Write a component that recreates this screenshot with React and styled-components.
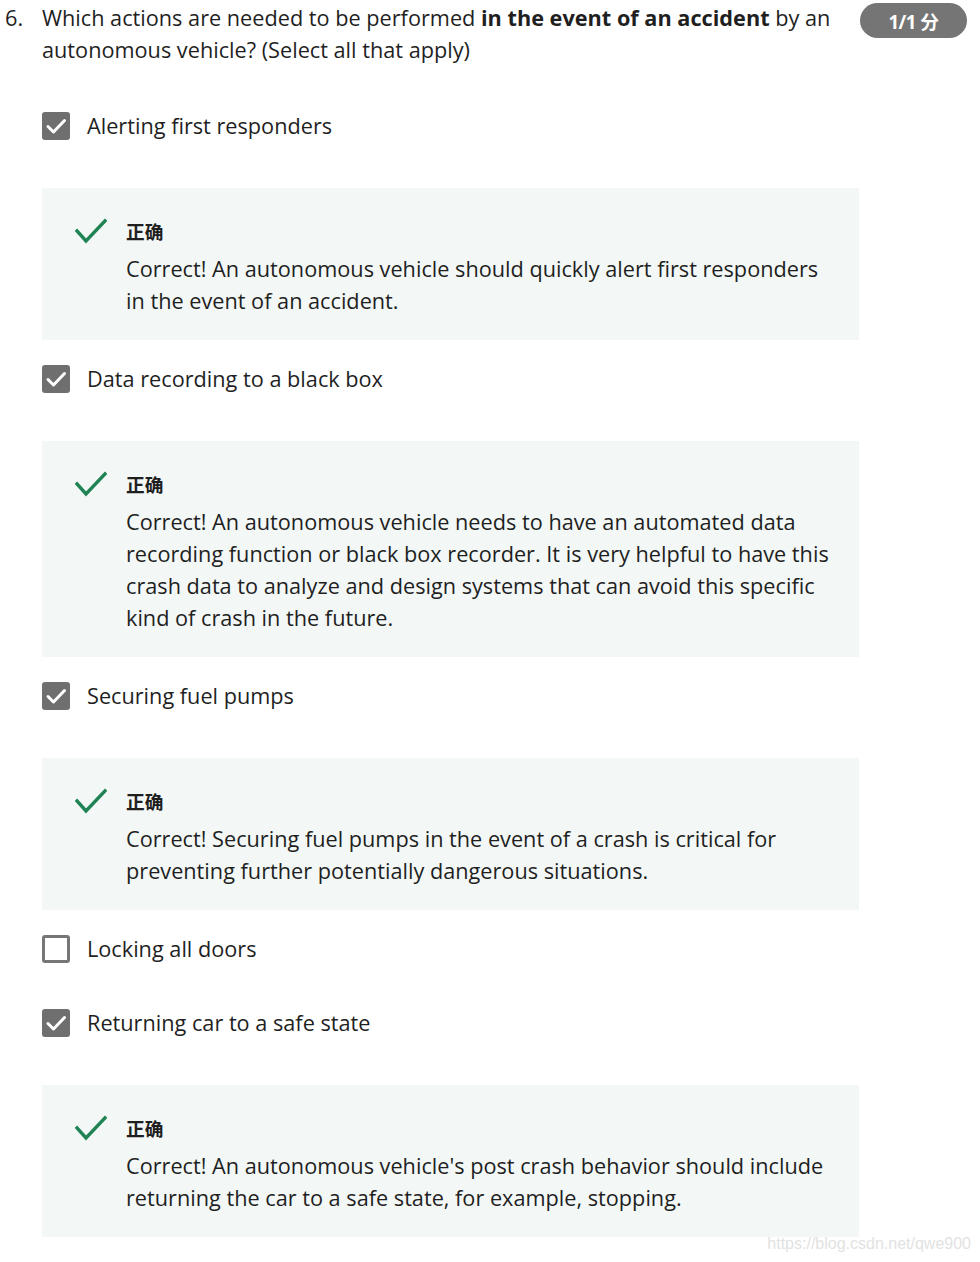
import { createGlobalStyle } from "styled-components";
import styled from "styled-components";

const GlobalStyle = createGlobalStyle`
  html, body {
    margin: 0;
    padding: 0;
    background: #ffffff;
  }
  body {
    font-family: "Open Sans", "Noto Sans CJK SC", sans-serif;
    color: #1f1f1f;
  }
`;

const Page = styled.div`
  position: relative;
  width: 980px;
  height: 1262px;
  overflow: hidden;
`;

const Header = styled.div`
  display: flex;
  align-items: flex-start;
  padding-top: 2px;
`;

const Number = styled.div`
  width: 37px;
  padding-left: 5px;
  flex-shrink: 0;
  font-size: 21.7px;
  line-height: 32px;
`;

const QuestionText = styled.div`
  width: 803px;
  flex-shrink: 0;
  font-size: 21.7px;
  line-height: 32px;
  color: #1f1f1f;

  b {
    font-weight: 700;
  }
`;

const Badge = styled.div`
  margin-left: 15px;
  margin-top: 1px;
  width: 107px;
  height: 35px;
  border-radius: 18px;
  background: #757575;
  color: #ffffff;
  font-weight: 700;
  font-size: 18.7px;
  display: flex;
  align-items: center;
  justify-content: center;
  letter-spacing: -0.5px;
`;

const Options = styled.div`
  margin-top: 46px;
  margin-left: 42px;
  width: 817px;
  display: flex;
  flex-direction: column;
`;

const OptionRow = styled.div`
  display: flex;
  align-items: center;
  height: 28px;
  margin-bottom: ${(p) => (p.hasFeedback ? "48px" : "46px")};
`;

const Box = styled.div`
  width: 28px;
  height: 28px;
  box-sizing: border-box;
  border-radius: 3px;
  flex-shrink: 0;
  display: flex;
  align-items: center;
  justify-content: center;
  background: ${(p) => (p.checked ? "#6f6f6f" : "#ffffff")};
  border: ${(p) => (p.checked ? "none" : "3px solid #767676")};
`;

const OptionLabel = styled.span`
  margin-left: 17px;
  font-size: 21.7px;
  line-height: 32px;
  color: #1f1f1f;
`;

const Feedback = styled.div`
  display: flex;
  background: #f3f8f6;
  padding: 30px 24px 23px 33px;
  margin-bottom: 25px;
`;

const IconCol = styled.div`
  width: 32px;
  flex-shrink: 0;
  margin-right: 19px;
`;

const FeedbackBody = styled.div`
  display: flex;
  flex-direction: column;
`;

const Verdict = styled.div`
  font-weight: 700;
  font-size: 18.7px;
  line-height: 28px;
  color: #1f1f1f;
  margin-bottom: 7px;
`;

const Explanation = styled.div`
  font-size: 21.7px;
  line-height: 32px;
  color: #1f1f1f;
`;

const Watermark = styled.div`
  position: absolute;
  right: 9px;
  bottom: 9px;
  font-family: "Liberation Sans", Arial, sans-serif;
  font-size: 16px;
  color: #e2e2e2;
`;

const TickIcon = () => (
  <svg width="28" height="28" viewBox="0 0 28 28">
    <path
      d="M6 14.5 L11.5 20 L22.5 8.5"
      fill="none"
      stroke="#ffffff"
      strokeWidth="3"
      strokeLinecap="round"
      strokeLinejoin="round"
    />
  </svg>
);

const GreenCheck = () => (
  <svg width="32" height="26" viewBox="0 0 32 26">
    <path
      d="M2 13 L11 23 L30 3"
      fill="none"
      stroke="#1f8354"
      strokeWidth="3.4"
      strokeLinecap="square"
    />
  </svg>
);

const options = [
  {
    label: "Alerting first responders",
    checked: true,
    feedback:
      "Correct! An autonomous vehicle should quickly alert first responders in the event of an accident.",
  },
  {
    label: "Data recording to a black box",
    checked: true,
    feedback:
      "Correct! An autonomous vehicle needs to have an automated data recording function or black box recorder. It is very helpful to have this crash data to analyze and design systems that can avoid this specific kind of crash in the future.",
  },
  {
    label: "Securing fuel pumps",
    checked: true,
    feedback:
      "Correct! Securing fuel pumps in the event of a crash is critical for preventing further potentially dangerous situations.",
  },
  { label: "Locking all doors", checked: false },
  {
    label: "Returning car to a safe state",
    checked: true,
    feedback:
      "Correct! An autonomous vehicle's post crash behavior should include returning the car to a safe state, for example, stopping.",
  },
];

const App = () => {
  return (
    <Page>
      <GlobalStyle />
      <Header>
        <Number>6.</Number>
        <QuestionText>
          Which actions are needed to be performed{" "}
          <b>in the event of an accident</b> by an autonomous vehicle? (Select
          all that apply)
        </QuestionText>
        <Badge>1/1 分</Badge>
      </Header>

      <Options>
        {options.map((opt) => (
          <div key={opt.label}>
            <OptionRow hasFeedback={!!opt.feedback}>
              <Box checked={opt.checked}>{opt.checked && <TickIcon />}</Box>
              <OptionLabel>{opt.label}</OptionLabel>
            </OptionRow>
            {opt.feedback && (
              <Feedback>
                <IconCol>
                  <GreenCheck />
                </IconCol>
                <FeedbackBody>
                  <Verdict>正确</Verdict>
                  <Explanation>{opt.feedback}</Explanation>
                </FeedbackBody>
              </Feedback>
            )}
          </div>
        ))}
      </Options>

      <Watermark>https://blog.csdn.net/qwe900</Watermark>
    </Page>
  );
};

export default App;
